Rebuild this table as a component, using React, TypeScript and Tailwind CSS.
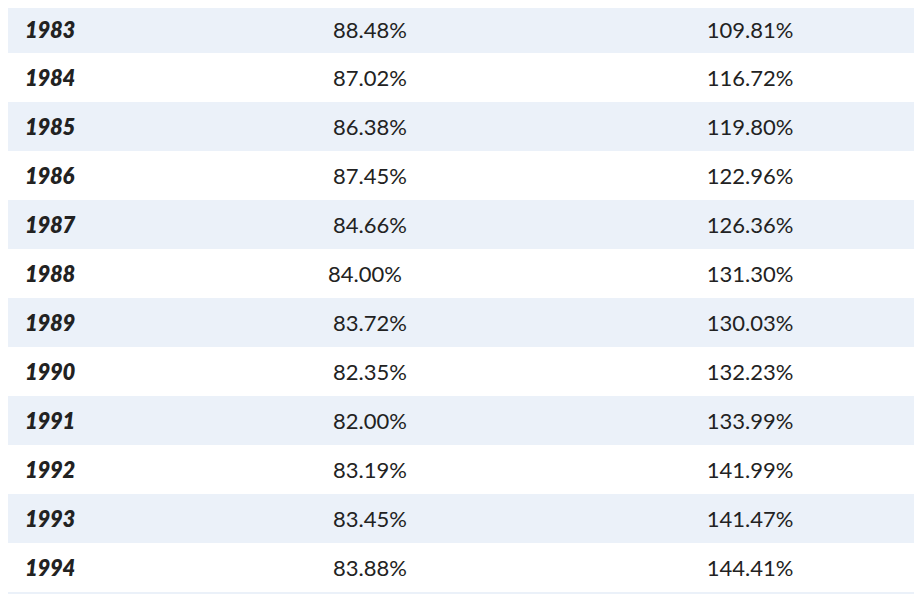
import React from "react";

const rows: [string, string, string, number?][] = [
  ["1983", "88.48%", "109.81%"],
  ["1984", "87.02%", "116.72%"],
  ["1985", "86.38%", "119.80%"],
  ["1986", "87.45%", "122.96%"],
  ["1987", "84.66%", "126.36%"],
  ["1988", "84.00%", "131.30%", 1],
  ["1989", "83.72%", "130.03%"],
  ["1990", "82.35%", "132.23%"],
  ["1991", "82.00%", "133.99%"],
  ["1992", "83.19%", "141.99%"],
  ["1993", "83.45%", "141.47%"],
  ["1994", "83.88%", "144.41%"],
  ["", "", ""],
];

export default function App() {
  return (
    <div
      className="w-[914px] h-[594px] overflow-hidden bg-white pt-[4px] pl-[8px] text-[#222222]"
      style={{ fontFamily: "Lato, 'Open Sans', sans-serif" }}
    >
      <div className="flex flex-col w-[906px]">
        {rows.map(([y, a, b, shift], i) => (
          <div
            key={i}
            className={`flex items-center h-[49px] shrink-0 text-[22px] ${
              i % 2 === 0 ? "bg-[#ebf1f9]" : "bg-white"
            } ${i === 0 ? "border-t-4 border-white pb-[3px]" : ""}`}
          >
            <div className="w-[146px] pl-[17px] font-extrabold italic tracking-[-0.3px]">{y}</div>
            <div className={`w-[432px] text-center ${shift ? "pr-[10px]" : ""}`}>{a}</div>
            <div className="w-[328px] text-center">{b}</div>
          </div>
        ))}
      </div>
    </div>
  );
}
